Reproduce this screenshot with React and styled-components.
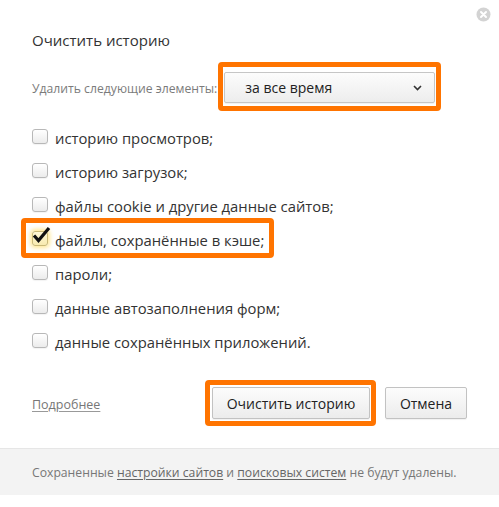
import styled, { createGlobalStyle } from "styled-components";

const GlobalStyle = createGlobalStyle`
  html, body {
    margin: 0;
    padding: 0;
    background: #fff;
  }
  body {
    font-family: "Open Sans", "Noto Sans", "DejaVu Sans", sans-serif;
    color: #333;
  }
`;

const Dialog = styled.div`
  position: relative;
  width: 499px;
  height: 507px;
  background: #fff;
  display: flex;
  flex-direction: column;
  box-sizing: border-box;
`;

const Content = styled.div`
  padding: 30px 32px 0 32px;
  display: flex;
  flex-direction: column;
`;

const CloseButton = styled.button`
  position: absolute;
  top: 7px;
  right: 8px;
  width: 15px;
  height: 15px;
  padding: 0;
  border: none;
  background: none;
  cursor: pointer;
  display: flex;
`;

const Title = styled.h1`
  margin: 0;
  font-size: 15px;
  line-height: 20px;
  font-weight: 400;
  color: #333;
`;

const RangeRow = styled.div`
  margin-top: 12px;
  display: flex;
  align-items: center;
  gap: 1px;
`;

const RangeLabel = styled.span`
  font-size: 12.2px;
  color: #7b7b7b;
  padding-top: 4px;
  white-space: nowrap;
`;

// orange annotation frame
const Highlight = styled.div`
  border: 5px solid #ff7400;
  border-radius: 4px;
  padding: ${(p) => p.pad || "2px"};
  display: flex;
  align-items: center;
  box-sizing: border-box;
`;

const Select = styled.div`
  width: 211px;
  height: 31px;
  box-sizing: border-box;
  border: 1px solid #c6c6c6;
  border-radius: 2px;
  background: linear-gradient(#fcfcfc, #ededed);
  box-shadow: 0 1px 1px rgba(0, 0, 0, 0.06);
  display: flex;
  align-items: center;
  justify-content: space-between;
  padding: 0 12px 0 20px;
  font-size: 14px;
  color: #222;
`;

const List = styled.div`
  margin-top: 8px;
  display: flex;
  flex-direction: column;
`;

const Row = styled.label`
  height: ${(p) => (p.framed ? "30px" : "34px")};
  display: flex;
  align-items: center;
  gap: 7px;
  font-size: 14.8px;
  color: #333;
  padding-top: 3px;
  box-sizing: border-box;
  white-space: nowrap;
`;

const RowFrame = styled(Highlight)`
  margin: -3px 0 -3px -11px;
  padding: 0 5px 0 6px;
  width: fit-content;
  height: 40px;
`;

const Box = styled.span`
  position: relative;
  flex: none;
  width: 16px;
  height: 15px;
  box-sizing: border-box;
  border: 1px solid ${(p) => (p.checked ? "#c9b978" : "#b8b8b8")};
  border-radius: 3px;
  background: ${(p) =>
    p.checked ? "linear-gradient(#fff8d6, #f7eab0)" : "linear-gradient(#ffffff, #ececec)"};
  box-shadow: ${(p) =>
    p.checked ? "0 0 4px 2px rgba(255, 214, 64, 0.55)" : "0 1px 1px rgba(0,0,0,0.05)"};
  margin-top: -3px;
`;

const CheckMark = styled.svg`
  position: absolute;
  left: -1px;
  top: -6px;
  overflow: visible;
`;

const Actions = styled.div`
  margin-top: 23px;
  display: flex;
  align-items: center;
`;

const MoreLink = styled.a`
  font-size: 12.5px;
  color: #777;
  text-decoration: underline;
  text-decoration-color: #999;
  text-underline-offset: 2px;
  margin-right: auto;
  padding-top: 2px;
`;

const Button = styled.button`
  height: 32px;
  box-sizing: border-box;
  border: 1px solid #c2c2c2;
  border-radius: 2px;
  background: linear-gradient(#fcfcfc, #ececec);
  box-shadow: 0 1px 1px rgba(0, 0, 0, 0.06);
  font-family: inherit;
  font-size: 14px;
  color: #222;
  width: ${(p) => p.w}px;
  padding: 0;
  cursor: pointer;
`;

const ButtonFrame = styled(Highlight)`
  padding: 2px 1px 2px 2px;
  margin-right: 9px;
`;

const Footer = styled.div`
  margin-top: 22px;
  height: 47px;
  box-sizing: border-box;
  border-top: 1px solid #e6e6e6;
  background: #f3f3f3;
  display: flex;
  align-items: center;
  padding: 0 32px;
  font-size: 12.2px;
  color: #777;
  white-space: nowrap;
`;

const FooterLink = styled.a`
  color: #666;
  text-decoration: underline;
  text-underline-offset: 2px;
`;

const rows = [
  "историю просмотров;",
  "историю загрузок;",
  "файлы cookie и другие данные сайтов;",
  "файлы, сохранённые в кэше;",
  "пароли;",
  "данные автозаполнения форм;",
  "данные сохранённых приложений.",
];

const CheckRow = ({ text, checked }) => {
  const row = (
    <Row framed={checked}>
      <Box checked={checked}>
        {checked && (
          <CheckMark width="18" height="18" viewBox="0 0 18 18">
            <path d="M2 9.5 L6.5 14.5 L17 2" fill="none" stroke="#111" strokeWidth="3.2" strokeLinejoin="miter" />
          </CheckMark>
        )}
      </Box>
      {text}
    </Row>
  );
  return checked ? <RowFrame>{row}</RowFrame> : row;
};

const App = () => {
  return (
    <>
      <GlobalStyle />
      <Dialog>
        <CloseButton aria-label="Закрыть">
          <svg width="15" height="15" viewBox="0 0 15 15">
            <circle cx="7.5" cy="7.5" r="7" fill="#d3d3d3" />
            <path d="M5 5 L10 10 M10 5 L5 10" stroke="#fff" strokeWidth="2" strokeLinecap="round" />
          </svg>
        </CloseButton>
        <Content>
          <Title>Очистить историю</Title>
          <RangeRow>
            <RangeLabel>Удалить следующие элементы:</RangeLabel>
            <Highlight pad="5px 1px 3px 1px">
              <Select>
                за все время
                <svg width="9" height="6" viewBox="0 0 9 6">
                  <path d="M1 1 L4.5 4.5 L8 1" fill="none" stroke="#333" strokeWidth="1.6" />
                </svg>
              </Select>
            </Highlight>
          </RangeRow>
          <List>
            {rows.map((t, i) => (
              <CheckRow key={t} text={t} checked={i === 3} />
            ))}
          </List>
          <Actions>
            <MoreLink href="#">Подробнее</MoreLink>
            <ButtonFrame>
              <Button w={158}>Очистить историю</Button>
            </ButtonFrame>
            <Button w={82}>Отмена</Button>
          </Actions>
        </Content>
        <Footer>
          <span>
            Сохраненные <FooterLink href="#">настройки сайтов</FooterLink> и{" "}
            <FooterLink href="#">поисковых систем</FooterLink> не будут удалены.
          </span>
        </Footer>
      </Dialog>
    </>
  );
};

export default App;
